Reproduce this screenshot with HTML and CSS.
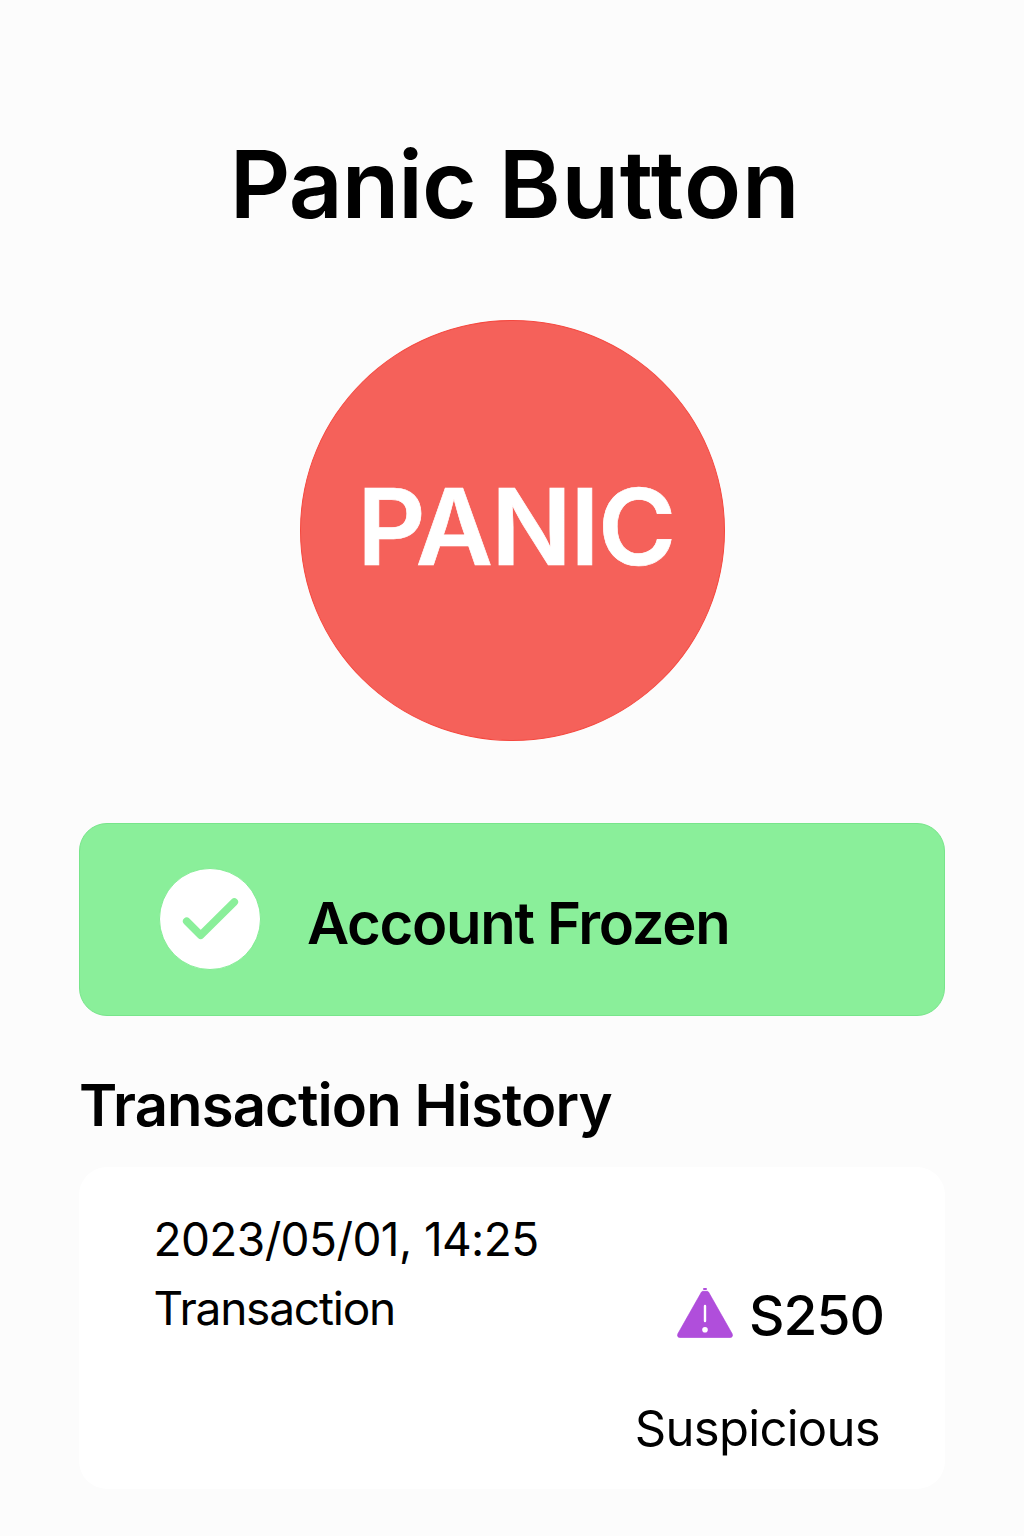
FILE: index.html
```html
<!DOCTYPE html>
<html lang="en">
<head>
<meta charset="utf-8">
<title>Panic Button</title>
<link rel="stylesheet" href="styles.css">
</head>
<body>
<main class="screen">
  <h1 class="title">Panic <span class="title-end">Button</span></h1>
  <button class="panic" type="button">PANIC</button>
  <section class="status">
    <svg class="status-icon" viewBox="0 0 102 102" aria-hidden="true">
      <circle cx="51" cy="51" r="50.5" fill="#fff" stroke="#74e986" stroke-width="0.8"/>
      <path d="M27.7 53.3L41.7 67.3L75.3 34" fill="none" stroke="#8aef9a" stroke-width="7.6" stroke-linecap="round" stroke-linejoin="round"/>
    </svg>
    <span class="status-text">Account Frozen</span>
  </section>
  <h2 class="heading">Transaction History</h2>
  <section class="card">
    <div class="details">
      <span class="date">2023/05/01, 14:25</span>
      <span class="kind">Transaction</span>
    </div>
    <div class="result">
      <div class="amount-row">
        <svg class="warning" viewBox="0 0 56 52" aria-hidden="true">
          <path d="M24.500 5Q25 4.300 26 4.300H30Q31 4.300 31.500 5L55 46.500Q56.500 50.500 53 50.500H3Q-.5 50.500 1 46.500Z" fill="#b04edb" stroke="#a63bd8" stroke-width=".6"/>
          <rect x="26" y="1" width="4" height="2" rx="1" fill="#b04edb"/>
          <path d="M28 19V34" stroke="#fff" stroke-width="2.400" stroke-linecap="round"/>
          <circle cx="28" cy="42.800" r="2.800" fill="#fff"/>
        </svg>
        <span class="amount">S250</span>
      </div>
      <span class="flag">Suspicious</span>
    </div>
  </section>
</main>
</body>
</html>
```
FILE: styles.css
```css
* { box-sizing: border-box; }
body { margin: 0; background: #fcfcfc; color: #000; font-family: Inter, "Liberation Sans", sans-serif; }
.screen { width: 1024px; height: 1536px; padding: 124px 79px 0; display: flex; flex-direction: column; overflow: hidden; }
.title { margin: 0 0 0 6px; height: 120px; line-height: 120px; font-size: 94px; font-weight: 600; letter-spacing: -.9px; text-align: center; white-space: nowrap; }
.title-end { letter-spacing: .8px; }
.panic { width: 425px; height: 421px; margin: 76px 0 0 221px; padding: 0 0 8px 7px; border: 1px solid #f5483f; border-radius: 50%; background: #f5615a; color: #fff; font: 600 106px/1 Inter, "Liberation Sans", sans-serif; letter-spacing: -1.500px; -webkit-text-stroke: .7px #fff; }
.status { height: 193px; margin-top: 82px; padding: 0 0 2px 79px; display: flex; align-items: center; gap: 46px; border: 1px solid #78e58b; border-radius: 28px; background: #8aef9a; }
.status-icon { width: 102px; height: 102px; }
.status-text { padding-top: 8px; font-size: 58px; font-weight: 600; letter-spacing: -1.300px; white-space: nowrap; }
.heading { margin: 51px 0 0; height: 76px; line-height: 76px; font-size: 58px; font-weight: 600; letter-spacing: -.9px; white-space: nowrap; }
.card { margin-top: 24px; height: 322px; padding: 38px 62px 0 74.500px; display: flex; justify-content: space-between; border-radius: 28px; background: #fff; }
.details { display: flex; flex-direction: column; font-size: 46px; line-height: 69px; white-space: nowrap; }
.date { letter-spacing: -.6px; }
.kind { letter-spacing: -1.200px; }
.result { display: flex; flex-direction: column; align-items: flex-end; padding-top: 75px; }
.amount-row { display: flex; align-items: center; gap: 16px; height: 70px; margin-right: -1px; }
.warning { width: 56px; height: 52px; margin-bottom: 4px; }
.amount { font-size: 55px; font-weight: 500; letter-spacing: -1px; }
.flag { margin: 44px 3px 0 0; font-size: 49px; line-height: 70px; letter-spacing: -.7px; }
```
